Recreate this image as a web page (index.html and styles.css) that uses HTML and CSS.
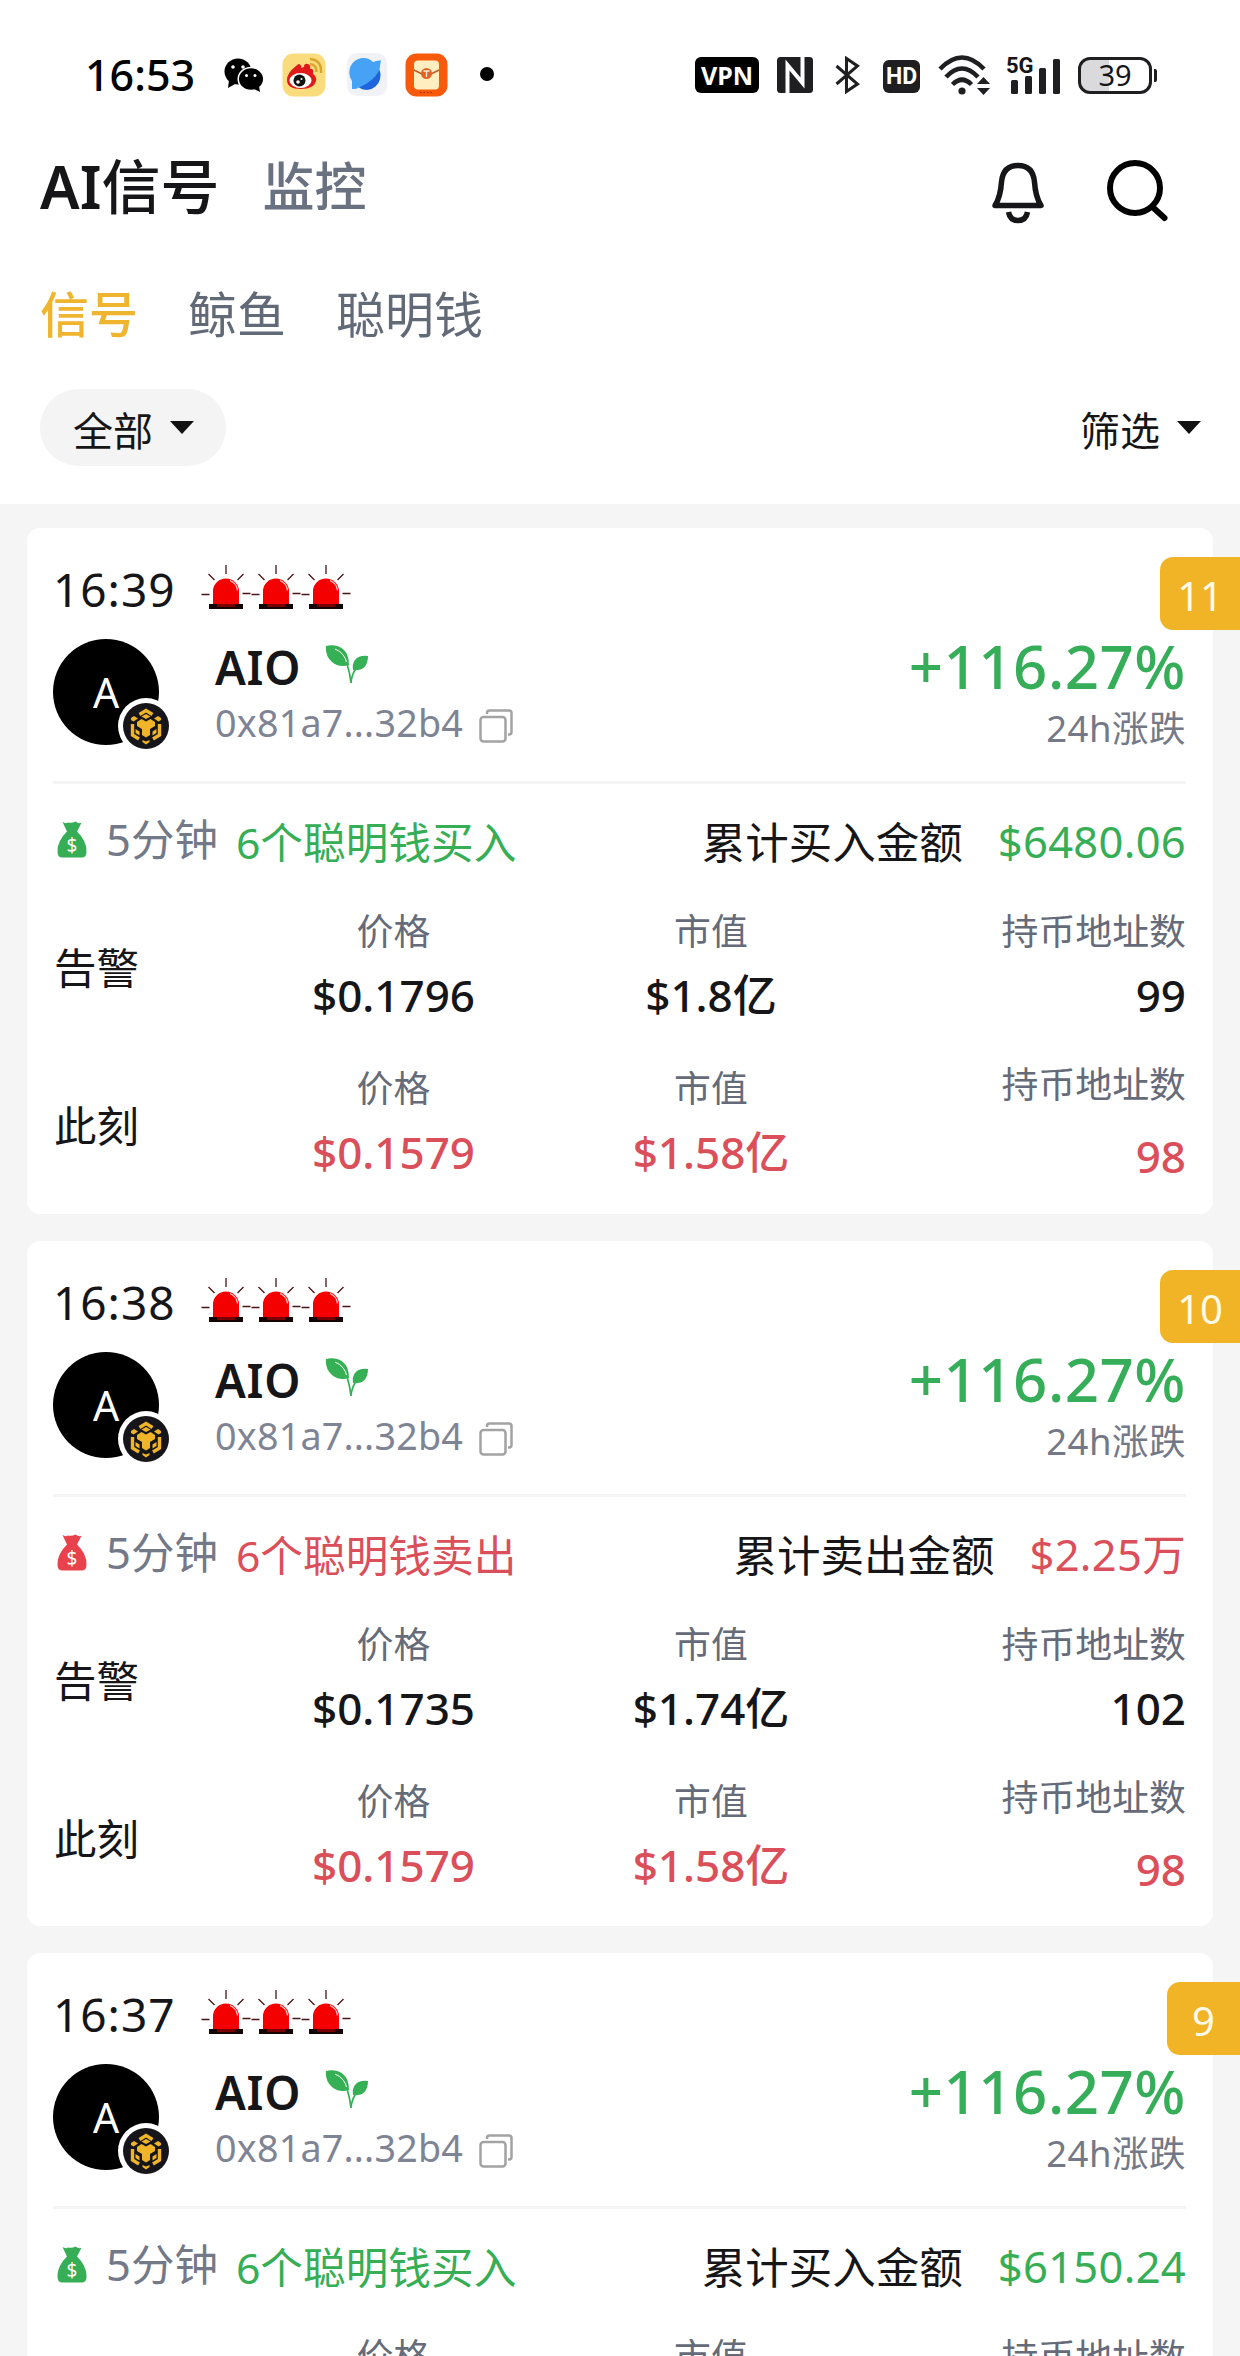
FILE: index.html
```
<!DOCTYPE html>
<html lang="zh-CN">
  <head>
    <meta charset="utf-8">
    <title>AI信号</title>
    <link rel="stylesheet" href="styles.css">
  </head>
  <body>
    <svg class="sprite">
      <symbol id="siren" viewBox="0 0 50 46">
        <path d="M25 1v9M7.500 10l6 6M42.500 10l-6 6M.5 30.500h8M41.500 29.500h8" stroke="#4a1518" stroke-width="1.300" fill="none"/>
        <path d="M12 41V27a13 12.500 0 0 1 26 0v14z" fill="#f40000"/>
        <path d="M29 16.500q7 3 7.500 10" stroke="#ffc9c9" stroke-width="1.300" fill="none"/>
        <path d="M8 40h34v5H8z" fill="#140404"/>
        <path d="M16 40h18v3H16z" fill="#7a0000"/>
      </symbol>
      <symbol id="sprout" viewBox="0 0 44 40">
        <path d="M1 1C6-.5 14 0 19 5Q24 10 24 20Q14 23 7 17Q0 11 1 1z" fill="#35b054"/>
        <path d="M43 11Q34 10 30 15Q27 19 28 25Q35 26 39.500 22Q43 18 43 11z" fill="#35b054"/>
        <path d="M10 4Q20 8 22 19" stroke="#fff" stroke-width="1" fill="none"/>
        <path d="M21.500 17Q25 28 26 38Q26.500 29 33 20" stroke="#35b054" stroke-width="1.700" fill="none"/>
      </symbol>
      <symbol id="copy" viewBox="0 0 34 34">
        <rect x="1.500" y="8" width="25" height="24.500" rx="3" fill="none" stroke="#a3a3a3" stroke-width="2.500"/>
        <path d="M8 5V4a2.500 2.500 0 0 1 2.500-2.500H30A2.500 2.500 0 0 1 32.500 4v19a2.500 2.500 0 0 1-2.500 2.500h-1" fill="none" stroke="#a3a3a3" stroke-width="2.500"/>
      </symbol>
      <symbol id="chain" viewBox="0 0 56 56">
        <circle cx="28" cy="28" r="28" fill="#fff"/>
        <circle cx="28" cy="28" r="23" fill="#15151a"/>
        <path d="M21.500 16.500L28 12.500l6.500 4M14.500 26v11l6.500 4M41.500 26v11L35 41" fill="none" stroke="#f0b429" stroke-width="3.400"/>
        <path d="M13 20l3-2 4 2.500-4.500 3L13 22zM43 20l-3-2-4 2.500 4.500 3L43 22z" fill="#f0b429"/>
        <path d="M28 16l4.500 2.500L28 21l-4.500-2.500zM19 24l4.500-3L28 23.500l4.500-2.500 4.500 3v4l-5 3v6l-4 2.500-4-2.500v-6l-5-3z" fill="#f0b429"/>
        <path d="M17.500 31l4 2.500v4l-4-2.500zM38.500 31l-4 2.500v4l4-2.500zM24.500 42l3.500 1.500 3.500-1.500v2L28 46.500 24.500 44z" fill="#f0b429"/>
      </symbol>
      <symbol id="bag" viewBox="0 0 30 37">
        <path d="M5.500 1q3 2 5.500.5Q15 2.500 18.500.5q3 2.500 6 1.200L20 10.500Q30 20 29.500 31q0 5.500-5 5.500h-19q-5 0-5-5.500Q0 20 10 10.500z" fill="currentColor"/>
        <text x="15" y="31" text-anchor="middle" class="bag-sign">$</text>
      </symbol>
    </svg>

    <header class="top">
      <div class="status">
        <span class="clock">16:53</span>
        <svg class="wechat" width="40" height="34" viewBox="0 0 40 34">
          <ellipse cx="14" cy="13.500" rx="13.500" ry="13"/>
          <path d="M5 22l-1 8 7-4z"/>
          <ellipse cx="27" cy="21" rx="12.800" ry="11.500" stroke="#fff" stroke-width="1.500"/>
          <path d="M30 31l6 3-1-6z"/>
          <g fill="#fff"><circle cx="9" cy="9" r="1.800"/><circle cx="19" cy="9" r="1.800"/><circle cx="22.500" cy="17.500" r="1.500"/><circle cx="31" cy="17.500" r="1.500"/></g>
        </svg>
        <svg class="weibo" width="44" height="44" viewBox="0 0 44 44">
          <rect x=".5" y=".5" width="43" height="43" rx="11" fill="#fbdc7c"/>
          <path d="M17 11q3 1 2 4l3-1q0-4 4-3 3 1 2 5 4-1 3 5 4 3 3 7-2 8-15 8Q5 36 5 27q0-7 9-14 2-2 3-2z" fill="#e01a1a"/>
          <ellipse cx="18.500" cy="27.500" rx="11" ry="7.500" fill="#fff"/>
          <circle cx="17.500" cy="27.500" r="6" fill="#111"/>
          <circle cx="16" cy="29" r="1.800" fill="#fff"/><circle cx="19.500" cy="26" r="1" fill="#fff"/>
          <path d="M28 6q12 1 11 14M28 11q7 1 6.500 8" fill="none" stroke="#d9a52e" stroke-width="2.500"/>
        </svg>
        <svg class="browser" width="40" height="44" viewBox="0 0 40 44">
          <rect width="40" height="43" rx="10" fill="#f1f2f5"/>
          <path d="M5 36V28A14 14.500 0 0 1 26 9Q30 7 34 7.500Q33 12 32.500 17A14 14.500 0 0 1 12 34.500Q9 36.500 5 36z" fill="#46a2f5"/>
          <path d="M32.500 17Q26 29 12 34.500A14 14.500 0 0 0 32.500 17z" fill="#1f64dc"/>
        </svg>
        <svg class="wallet" width="44" height="44" viewBox="0 0 44 44">
          <rect x=".5" y=".5" width="42" height="43" rx="11" fill="#f9590b"/>
          <rect x="9" y="7.500" width="25" height="29" rx="4" fill="#ffeec0"/>
          <path d="M9 17l8 4M34 17l-8 4" fill="none" stroke="#c45b24" stroke-width="1.500"/>
          <circle cx="21.500" cy="20.500" r="5.500" fill="#e0642a"/>
          <path d="M18.500 18h6M21.500 18v6" stroke="#fff0cf" stroke-width="1.300"/>
          <path d="M15 39.500h13" stroke="#8f2f08" stroke-width="1" stroke-dasharray="1.500 2"/>
        </svg>
        <i class="more"></i>
        <div class="system">
          <span class="vpn">VPN</span>
          <svg class="nfc" width="36" height="36" viewBox="0 0 36 36">
            <rect width="36" height="36" rx="3.500" fill="#1f1f21"/>
            <path d="M10.500 36V8L25.500 26V0" fill="none" stroke="#fff" stroke-width="4"/>
            <path d="M14 0l9 10v6zM22 36l-9-10v-6z" fill="#1f1f21"/>
          </svg>
          <svg class="bluetooth" width="25" height="38" viewBox="0 0 25 38">
            <path d="M1.500 10L22.500 28 11.500 35.500V2.500L22.500 10 1.500 28" fill="none" stroke="#1f1f21" stroke-width="3"/>
          </svg>
          <span class="hd">HD</span>
          <svg class="wifi" width="53" height="40" viewBox="0 0 53 40">
            <path d="M2 14Q24-9 46 14M8 22Q24 5 40 22M14.500 29.500Q24 20 33.500 29.500" fill="none" stroke="#1f1f21" stroke-width="4.500"/>
            <circle cx="24" cy="36" r="3.600" fill="#1f1f21"/>
            <path d="M39 29l6.500-7 6.500 7zM39 33l6.500 7 6.500-7z" fill="#1f1f21"/>
          </svg>
          <div class="cell">
            <span>5G</span>
            <svg width="56" height="39" viewBox="0 0 56 39" fill="#1f1f21">
              <rect x="5" y="24" width="7" height="14" rx="1.500"/><rect x="19" y="20" width="7" height="18" rx="1.500"/><rect x="33" y="12" width="7" height="26" rx="1.500"/><rect x="47" y="3" width="7" height="35" rx="1.500"/>
            </svg>
          </div>
          <div class="battery"><span>39</span></div>
        </div>
      </div>

      <div class="title-bar">
        <h1><span>AI</span>信号</h1>
        <span class="monitor">监控</span>
        <svg class="bell" width="54" height="62" viewBox="0 0 54 62" fill="none" stroke="#161618" stroke-width="5.500" stroke-linejoin="round">
          <path d="M4 43.500Q9.500 35 10.500 20Q12 3.500 27 3.500Q42 3.500 43.500 20Q44.500 35 50 43.500z"/>
          <path d="M17.500 50Q19 58.500 27 58.500Q35 58.500 36.500 50"/>
        </svg>
        <svg class="search" width="62" height="62" viewBox="0 0 62 62" fill="none" stroke="#000" stroke-width="6">
          <ellipse cx="28" cy="28" rx="25" ry="25"/>
          <path d="M45 46.500L57.500 58" stroke-linecap="round"/>
        </svg>
      </div>

      <nav class="tabs">
        <span class="active">信号</span>
        <span>鲸鱼</span>
        <span>聪明钱</span>
      </nav>

      <div class="filters">
        <span class="pill">全部 <i class="caret"></i></span>
        <span class="filter">筛选 <i class="caret"></i></span>
      </div>
    </header>

    <main>
      <section class="card">
        <span class="count">11</span>
        <div class="time">16:39
          <div class="sirens"><svg><use href="#siren"/></svg><svg><use href="#siren"/></svg><svg><use href="#siren"/></svg></div>
        </div>
        <div class="token">
          <div class="avatar">A<svg class="chain"><use href="#chain"/></svg></div>
          <div class="info">
            <div class="name">AIO <svg class="sprout"><use href="#sprout"/></svg></div>
            <div class="address">0x81a7...32b4 <svg class="copy"><use href="#copy"/></svg></div>
          </div>
          <div class="change">
            <div class="percent">+116.27%</div>
            <div class="period">24h涨跌</div>
          </div>
        </div>
        <div class="trade buy">
          <svg class="bag"><use href="#bag"/></svg>
          <span class="minutes">5分钟</span>
          <span class="action">6个聪明钱买入</span>
          <span class="total">累计买入金额</span>
          <span class="amount">$6480.06</span>
        </div>
        <div class="stats">
          <div class="when">告警</div>
          <div class="stat"><label>价格</label><b>$0.1796</b></div>
          <div class="stat"><label>市值</label><b>$1.8亿</b></div>
          <div class="stat holders"><label>持币地址数</label><b>99</b></div>
        </div>
        <div class="stats now">
          <div class="when">此刻</div>
          <div class="stat"><label>价格</label><b>$0.1579</b></div>
          <div class="stat"><label>市值</label><b>$1.58亿</b></div>
          <div class="stat holders"><label>持币地址数</label><b>98</b></div>
        </div>
      </section>

      <section class="card">
        <span class="count">10</span>
        <div class="time">16:38
          <div class="sirens"><svg><use href="#siren"/></svg><svg><use href="#siren"/></svg><svg><use href="#siren"/></svg></div>
        </div>
        <div class="token">
          <div class="avatar">A<svg class="chain"><use href="#chain"/></svg></div>
          <div class="info">
            <div class="name">AIO <svg class="sprout"><use href="#sprout"/></svg></div>
            <div class="address">0x81a7...32b4 <svg class="copy"><use href="#copy"/></svg></div>
          </div>
          <div class="change">
            <div class="percent">+116.27%</div>
            <div class="period">24h涨跌</div>
          </div>
        </div>
        <div class="trade sell">
          <svg class="bag"><use href="#bag"/></svg>
          <span class="minutes">5分钟</span>
          <span class="action">6个聪明钱卖出</span>
          <span class="total">累计卖出金额</span>
          <span class="amount">$2.25万</span>
        </div>
        <div class="stats">
          <div class="when">告警</div>
          <div class="stat"><label>价格</label><b>$0.1735</b></div>
          <div class="stat"><label>市值</label><b>$1.74亿</b></div>
          <div class="stat holders"><label>持币地址数</label><b>102</b></div>
        </div>
        <div class="stats now">
          <div class="when">此刻</div>
          <div class="stat"><label>价格</label><b>$0.1579</b></div>
          <div class="stat"><label>市值</label><b>$1.58亿</b></div>
          <div class="stat holders"><label>持币地址数</label><b>98</b></div>
        </div>
      </section>

      <section class="card">
        <span class="count">9</span>
        <div class="time">16:37
          <div class="sirens"><svg><use href="#siren"/></svg><svg><use href="#siren"/></svg><svg><use href="#siren"/></svg></div>
        </div>
        <div class="token">
          <div class="avatar">A<svg class="chain"><use href="#chain"/></svg></div>
          <div class="info">
            <div class="name">AIO <svg class="sprout"><use href="#sprout"/></svg></div>
            <div class="address">0x81a7...32b4 <svg class="copy"><use href="#copy"/></svg></div>
          </div>
          <div class="change">
            <div class="percent">+116.27%</div>
            <div class="period">24h涨跌</div>
          </div>
        </div>
        <div class="trade buy">
          <svg class="bag"><use href="#bag"/></svg>
          <span class="minutes">5分钟</span>
          <span class="action">6个聪明钱买入</span>
          <span class="total">累计买入金额</span>
          <span class="amount">$6150.24</span>
        </div>
        <div class="stats">
          <div class="when"></div>
          <div class="stat"><label>价格</label></div>
          <div class="stat"><label>市值</label></div>
          <div class="stat holders"><label>持币地址数</label></div>
        </div>
      </section>
    </main>
  </body>
</html>
```

FILE: styles.css
```
* {
  box-sizing: border-box;
}

body {
  margin: 0;
  width: 1240px;
  height: 2356px;
  overflow: hidden;
  background: #f5f5f5;
  color: #161618;
  font-family: "Noto Sans", "Noto Sans CJK SC", sans-serif;
}

svg {
  flex: none;
}

.sprite {
  display: none;
}

.top {
  height: 504px;
  background: #fff;
}

/* status bar */
.status {
  display: flex;
  align-items: center;
  height: 96px;
  padding: 54px 83px 0 85px;
}

.clock {
  width: 139px;
  font-size: 43px;
  font-weight: 500;
  line-height: 44px;
  color: #000;
}

.weibo {
  margin-left: 18px;
}

.browser {
  margin-left: 21px;
}

.wallet {
  margin-left: 18px;
}

.more {
  width: 14px;
  height: 14px;
  margin: -2px 0 0 31px;
  border-radius: 50%;
  background: #000;
}

.system {
  display: flex;
  align-items: center;
  margin-left: auto;
}

.vpn,
.hd {
  display: flex;
  align-items: center;
  justify-content: center;
  width: 64px;
  height: 36px;
  border-radius: 6px;
  background: #000;
  color: #fff;
  font-size: 25px;
  font-weight: 700;
}

.hd {
  width: 37px;
  height: 33px;
  margin: 2px 0 0 23px;
  background: #1f1f21;
  font-family: Roboto, sans-serif;
  font-size: 23px;
}

.nfc {
  margin-left: 18px;
}

.bluetooth {
  margin-left: 22px;
}

.wifi {
  margin-left: 18px;
}

.cell {
  position: relative;
  height: 39px;
  margin-left: 15px;
}

.cell span {
  position: absolute;
  top: -1px;
  left: 0;
  font-family: Roboto, sans-serif;
  font-size: 22px;
  font-weight: 700;
  line-height: 22px;
}

.battery {
  display: flex;
  align-items: center;
  justify-content: center;
  position: relative;
  width: 74px;
  height: 37px;
  margin: 0 5px 0 16px;
  border: 3px solid #1f1f21;
  border-radius: 12px;
  background: linear-gradient(90deg, #dadadc 28px, #fff 28px);
  background-clip: padding-box;
  font-size: 29px;
  line-height: 30px;
}

.battery::after {
  content: "";
  position: absolute;
  right: -8px;
  top: 9px;
  width: 3px;
  height: 13px;
  border-radius: 0 2px 2px 0;
  background: #1f1f21;
}

/* header */
.title-bar {
  display: flex;
  align-items: flex-start;
  height: 134px;
  padding: 60px 71px 0 40px;
}

h1 {
  margin: 0;
  font-size: 59px;
  font-weight: 500;
  line-height: 60px;
}

h1 span {
  font-weight: 600;
}

.monitor {
  margin-left: 43px;
  color: #6a7180;
  font-size: 52px;
  font-weight: 500;
  line-height: 60px;
}

.bell {
  margin: 6px 0 0 auto;
}

.search {
  margin: 4px 0 0 62px;
}

.tabs {
  display: flex;
  gap: 50px;
  height: 159px;
  padding: 54px 0 0 40px;
  color: #626977;
  font-size: 49px;
  line-height: 60px;
}

.tabs .active {
  color: #efb52f;
  font-weight: 500;
}

.filters {
  display: flex;
  justify-content: space-between;
  padding: 0 39px 0 40px;
  font-size: 40px;
}

.pill,
.filter {
  display: flex;
  align-items: center;
  gap: 17px;
  height: 77px;
  padding-top: 3px;
}

.pill {
  width: 186px;
  padding-left: 33px;
  border-radius: 39px;
  background: #f4f4f4;
}

.caret {
  margin-top: -3px;
  border: 12px solid transparent;
  border-top: 13px solid #111;
  border-bottom: 0;
}

/* signal cards */
main {
  display: flex;
  flex-direction: column;
  gap: 27px;
  padding: 24px 27px;
}

.card {
  flex: none;
  position: relative;
  height: 685.6px;
  padding: 35px 27px 0 26px;
  border-radius: 13px;
  background: #fff;
}

.count {
  position: absolute;
  top: 29px;
  right: -27px;
  min-width: 73px;
  height: 73px;
  padding: 0 17px;
  border-radius: 13px 0 0 13px;
  background: #f2b427;
  color: #fffbe8;
  font-size: 40px;
  line-height: 77px;
  text-align: center;
}

.time {
  display: flex;
  height: 52px;
  font-size: 46px;
  letter-spacing: 1px;
  line-height: 52px;
}

.sirens {
  display: flex;
  margin: 1px 0 0 25px;
}

.sirens svg {
  width: 50px;
  height: 46px;
}

.token {
  display: flex;
  height: 142px;
  margin-top: 24px;
}

.avatar {
  position: relative;
  width: 106px;
  height: 106px;
  border-radius: 50%;
  background: #000;
  color: #fff;
  font-size: 41px;
  line-height: 106px;
  text-align: center;
}

.chain {
  position: absolute;
  left: 65px;
  top: 59px;
  width: 56px;
  height: 56px;
}

.info {
  margin: 2px 0 0 56px;
}

.name {
  display: flex;
  font-size: 46px;
  font-weight: 600;
  letter-spacing: .7px;
  line-height: 52px;
}

.sprout {
  width: 44px;
  height: 40px;
  margin: 4px 0 0 24px;
}

.address {
  display: flex;
  margin-top: 8px;
  color: #7e8494;
  font-size: 37.7px;
  letter-spacing: .2px;
  line-height: 44px;
}

.copy {
  width: 34px;
  height: 34px;
  margin: 8px 0 0 16px;
}

.change {
  margin: -5px 0 0 auto;
  text-align: right;
}

.percent {
  color: #36ad58;
  font-size: 60px;
  font-weight: 500;
  letter-spacing: .5px;
  line-height: 64px;
}

.period {
  margin-top: 10px;
  color: #747987;
  font-size: 36.5px;
  letter-spacing: .5px;
  line-height: 40px;
}

.trade {
  display: flex;
  height: 85px;
  padding-top: 32px;
  border-top: 3px solid #f4f4f4;
  font-size: 43.500px;
  line-height: 50px;
}

.bag {
  width: 30px;
  height: 37px;
  margin: 5px 0 0 4px;
}

.bag-sign {
  fill: #fff;
  font-size: 19px;
}

.minutes {
  margin: -2px 0 0 19px;
  color: #747987;
}

.action {
  margin: 2px 0 0 18px;
  font-size: 42.700px;
}

.total {
  margin: 1px 35px 0 auto;
}

.amount {
  letter-spacing: .3px;
}

.buy .bag,
.buy .action,
.buy .amount {
  color: #35ae55;
}

.sell .action,
.sell .amount {
  color: #db4f5a;
}

.sell .bag {
  color: #e8434d;
}

.stats {
  display: grid;
  grid-template-columns: 182px 317px 318px 1fr;
  margin-top: 45px;
}

.when {
  padding: 32px 0 0 1px;
  font-size: 42.500px;
  line-height: 50px;
}

.stat {
  display: flex;
  flex-direction: column;
  gap: 19px;
  text-align: center;
}

.stat label {
  color: #656b78;
  font-size: 36.900px;
  line-height: 40px;
}

.stat b {
  font-size: 44px;
  font-weight: 500;
  line-height: 50px;
}

.holders {
  text-align: right;
}

.now {
  margin-top: 48px;
}

.now .when {
  padding-top: 33px;
}

.now b {
  color: #db4f5a;
}

.now .holders {
  gap: 27px;
  margin-top: -4px;
}
```
